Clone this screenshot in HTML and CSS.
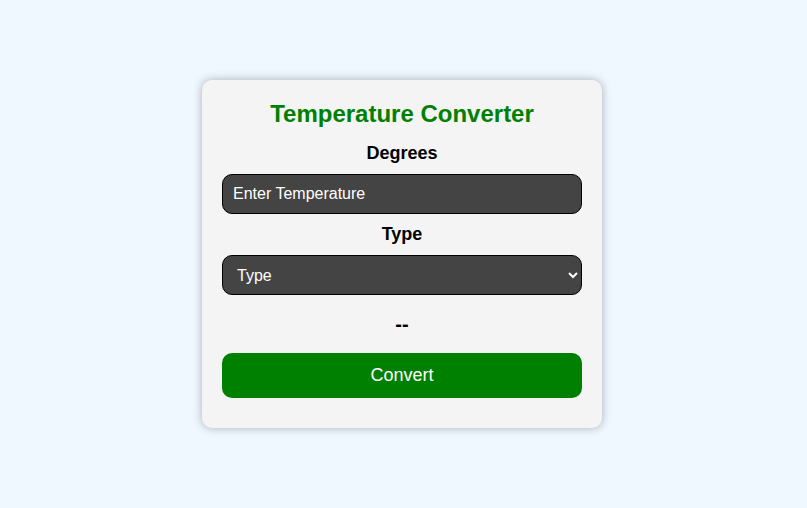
FILE: index.html
```html
<!DOCTYPE html>
<html lang="en">
<head>
<meta charset="utf-8">
<title>Temperature Converter</title>
<link rel="stylesheet" href="styles.css">
</head>
<body>
  <main class="page">
    <div class="card">
      <h2 class="title">Temperature Converter</h2>
      <label class="label" for="deg">Degrees</label>
      <input class="field" id="deg" type="text" placeholder="Enter Temperature">
      <label class="label" for="type">Type</label>
      <select class="field select" id="type">
        <option>Type</option>
        <option>Celsius</option>
        <option>Fahrenheit</option>
      </select>
      <p class="result">--</p>
      <button class="btn" type="button">Convert</button>
    </div>
  </main>
</body>
</html>
```

FILE: styles.css
```css
html, body {
  margin: 0;
  padding: 0;
}
body {
  background: #f0f8ff;
  font-family: "Liberation Sans", Arial, sans-serif;
  height: 508px;
}
.page {
  display: flex;
  justify-content: center;
  padding-top: 80px;
  padding-right: 3px;
}
.card {
  width: 360px;
  padding: 20px 20px 30px;
  background: #f4f4f4;
  border-radius: 10px;
  box-shadow: 0 0 10px rgba(0, 0, 0, 0.3);
  display: flex;
  flex-direction: column;
  align-items: stretch;
  text-align: center;
}
.title {
  margin: 0 0 15px;
  font-size: 24px;
  line-height: 28px;
  font-weight: bold;
  color: #008000;
}
.label {
  font-size: 18px;
  line-height: 21px;
  font-weight: bold;
  color: #000;
  margin-bottom: 10px;
}
.field {
  box-sizing: border-box;
  width: 360px;
  height: 40px;
  margin: 0 0 10px;
  padding: 0 10px;
  background: #444444;
  color: #ffffff;
  border: 1px solid #000;
  border-radius: 10px;
  font-family: "Liberation Sans", Arial, sans-serif;
  font-size: 16px;
  text-align: left;
  outline: none;
}
.field::placeholder {
  color: #ffffff;
  opacity: 1;
}
.select {
  margin-bottom: 0;
}
.result {
  margin: 18px 0 17px;
  font-size: 20px;
  line-height: 23px;
  font-weight: bold;
  color: #000;
}
.btn {
  height: 45px;
  width: 360px;
  border: none;
  border-radius: 10px;
  background: #008000;
  color: #fff;
  font-family: "Liberation Sans", Arial, sans-serif;
  font-size: 18px;
  cursor: pointer;
}
```
